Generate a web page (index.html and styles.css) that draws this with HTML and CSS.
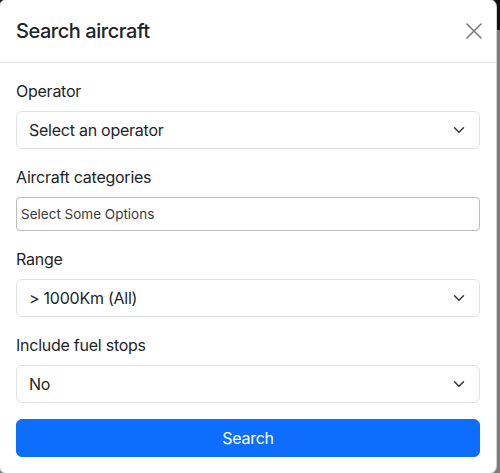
FILE: index.html
```html
<!DOCTYPE html>
<html lang="en">
<head>
<meta charset="utf-8">
<title>Search aircraft</title>
<link rel="stylesheet" href="styles.css">
</head>
<body>
<div class="modal">
  <div class="modal-header">
    <h5 class="modal-title">Search aircraft</h5>
    <button class="btn-close" type="button" aria-label="Close">
      <svg viewBox="0 0 16 16" width="16" height="16"><path d="M1 1 15 15M15 1 1 15" stroke="#7a7a7a" stroke-width="1.6" stroke-linecap="round" fill="none"/></svg>
    </button>
  </div>
  <div class="modal-body">
    <div class="field">
      <label class="form-label">Operator</label>
      <div class="form-select">Select an operator</div>
    </div>
    <div class="field">
      <label class="form-label">Aircraft categories</label>
      <div class="chosen">Select Some Options</div>
    </div>
    <div class="field">
      <label class="form-label">Range</label>
      <div class="form-select">&gt; 1000Km (All)</div>
    </div>
    <div class="field">
      <label class="form-label">Include fuel stops</label>
      <div class="form-select">No</div>
    </div>
    <button class="btn-primary" type="button">Search</button>
  </div>
</div>
</body>
</html>
```

FILE: styles.css
```css
html, body {
  margin: 0;
  padding: 0;
  height: 100%;
}
body {
  background: linear-gradient(to bottom, #111 0, #111 30px, #7c7c7c 30px, #7c7c7c 100%);
  font-family: Inter, "Noto Sans", sans-serif;
  color: #212529;
  overflow: hidden;
}
.modal {
  width: 498px;
  margin: -1px 0 0 -1px;
  background: #fff;
  border: 1px solid rgba(0,0,0,.175);
  border-radius: 8px;
  box-sizing: border-box;
}
.modal-header {
  display: flex;
  align-items: center;
  padding: 16px 16px;
  border-bottom: 1px solid #dee2e6;
}
.modal-title {
  margin: 0;
  font-size: 20px;
  font-weight: 500;
  line-height: 30px;
  letter-spacing: -0.45px;
}
.btn-close {
  margin: -8px -6px -8px auto;
  padding: 4px;
  width: 24px;
  height: 24px;
  border: 0;
  background: transparent;
  display: flex;
  align-items: center;
  justify-content: center;
}
.modal-body {
  padding: 16px;
  display: flex;
  flex-direction: column;
}
.field {
  margin-bottom: 16px;
  display: flex;
  flex-direction: column;
}
.form-label {
  font-size: 16px;
  line-height: 24px;
  margin-bottom: 8px;
  letter-spacing: -0.25px;
}
.form-select {
  height: 38px;
  box-sizing: border-box;
  border: 1px solid #dee2e6;
  border-radius: 6px;
  padding: 6px 36px 6px 12px;
  font-size: 16px;
  line-height: 24px;
  letter-spacing: -0.25px;
  background-image: url("data:image/svg+xml,%3csvg xmlns='http://www.w3.org/2000/svg' viewBox='0 0 16 16'%3e%3cpath fill='none' stroke='%23343a40' stroke-linecap='round' stroke-linejoin='round' stroke-width='2' d='m2 5 6 6 6-6'/%3e%3c/svg%3e");
  background-repeat: no-repeat;
  background-position: right 12px center;
  background-size: 16px 12px;
}
.chosen {
  height: 34px;
  box-sizing: border-box;
  border: 1px solid #bdbdbd;
  border-radius: 4px;
  padding: 0 4px;
  font-size: 13.5px;
  line-height: 32px;
  color: #3a3a3a;
}
.btn-primary {
  height: 38px;
  border: 1px solid #0d6efd;
  border-radius: 6px;
  background: #0d6efd;
  color: #fff;
  font-family: inherit;
  font-size: 16px;
  line-height: 24px;
  letter-spacing: -0.25px;
}
```
